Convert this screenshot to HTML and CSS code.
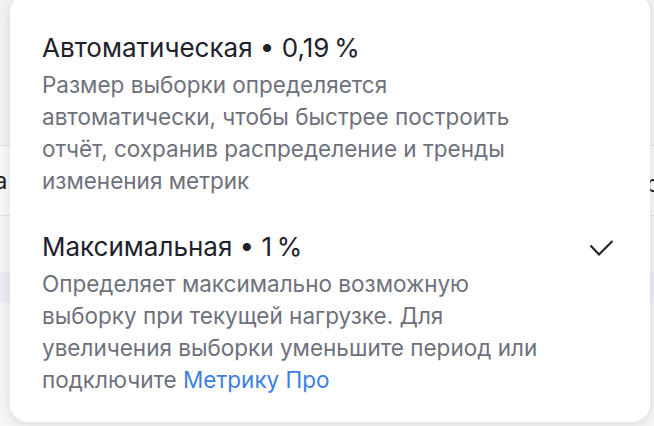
FILE: index.html
```html
<!DOCTYPE html>
<html>
<head>
<meta charset="utf-8">
<link rel="stylesheet" href="styles.css">
<title>Выборка</title>
</head>
<body>
<div class="table">
  <div class="row row-top"></div>
  <div class="row row-text"><span class="cell-left">а</span><span class="cell-right">ра</span></div>
  <div class="row row-plain"></div>
  <div class="row row-hover"></div>
  <div class="row row-rest"></div>
</div>

<div class="popup">
  <div class="item">
    <div class="item-head">
      <span class="item-title">Автоматическая • 0,19&#8201;%</span>
    </div>
    <div class="item-desc">Размер выборки определяется автоматически, чтобы быстрее построить отчёт, сохранив распределение и тренды изменения метрик</div>
  </div>
  <div class="item item-selected">
    <div class="item-head">
      <span class="item-title">Максимальная • 1&#8201;%</span>
      <svg class="check" width="24" height="24" viewBox="0 0 24 24"><path d="M1.5 10.5l8.5 9L23.5 6" fill="none" stroke="#26262e" stroke-width="2.2"/></svg>
    </div>
    <div class="item-desc">Определяет максимально возможную выборку при текущей нагрузке. Для увеличения выборки уменьшите период или подключите <a class="link" href="#">Метрику Про</a></div>
  </div>
</div>
</body>
</html>
```

FILE: styles.css
```css
html, body {
  margin: 0;
  height: 100%;
  overflow: hidden;
}
body {
  font-family: Inter, "Noto Sans", sans-serif;
  background-color: #f6f6f8;
  color: #21212b;
}
.table {
  display: flex;
  flex-direction: column;
}
.row {
  border-bottom: 1px solid #e2e2e6;
}
.row-top {
  height: 145px;
  background-color: #f4f4f6;
}
.row-text {
  height: 69px;
  display: flex;
  justify-content: space-between;
  align-items: center;
  font-size: 24px;
  background-color: #f9f9fa;
  overflow: hidden;
}
.cell-left {
  margin-left: -6px;
}
.cell-right {
  margin-right: -20px;
  padding-top: 6px;
}
.row-plain {
  height: 56px;
  border-bottom: none;
}
.row-hover {
  height: 31px;
  background-color: #eceef6;
  border-bottom: none;
}
.row-rest {
  height: 200px;
  border-bottom: none;
}

.popup {
  position: absolute;
  left: 10px;
  top: -6px;
  width: 640px;
  box-sizing: border-box;
  padding: 21px 0 9px;
  background-color: #fff;
  border-radius: 18px;
  box-shadow: 0 2px 14px rgba(0, 0, 0, 0.12);
}
.item {
  padding: 17px 37px 17px 32px;
}
.item-head {
  display: flex;
  justify-content: space-between;
  align-items: center;
  height: 32px;
}
.item-title {
  font-size: 26px;
  line-height: 32px;
  color: #21212b;
}
.item-desc {
  margin-top: 5px;
  font-size: 22.5px;
  line-height: 32px;
  color: #6e717c;
  max-width: 510px;
}
.link {
  color: #3d7fe3;
  text-decoration: none;
}
.check {
  display: block;
}
```
